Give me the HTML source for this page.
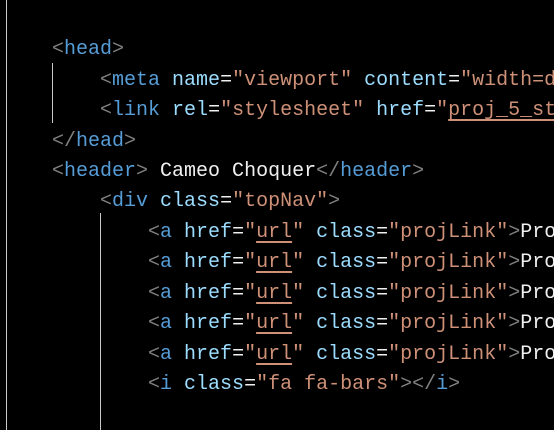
<!DOCTYPE html><html><head><style>
html{overflow:hidden;}
body{margin:0;background:#000;width:554px;height:430px;overflow:hidden;position:relative;font-family:"Liberation Mono",monospace;font-size:20px;}
.l{position:absolute;white-space:pre;line-height:30px;height:30px;max-width:calc(554px - 100%);}
.g{color:#808080}.t{color:#569cd6}.a{color:#9cdcfe}.s{color:#ce9178}.w{color:#f0f0f0}
.u{text-decoration:underline;text-decoration-color:#ce9178;text-underline-offset:4px;}
.v{position:absolute;width:1px;background:#c8c8c8;}
.c{position:absolute;left:0;top:0;width:554px;height:430px;overflow:hidden;}
</style></head><body><div class="c">
<div class="v" style="left:6px;top:0;height:430px"></div>
<div class="v" style="left:52px;top:63px;height:60px"></div>
<div class="v" style="left:100px;top:213px;height:217px"></div>
<div class="l" style="left:52px;top:35px"><span class="g">&lt;</span><span class="t">head</span><span class="g">&gt;</span></div>
<div class="l" style="left:100px;top:66px"><span class="g">&lt;</span><span class="t">meta</span> <span class="a">name</span><span class="w">=</span><span class="s">"viewport"</span> <span class="a">content</span><span class="w">=</span><span class="s">"width=d</span></div>
<div class="l" style="left:100px;top:96px"><span class="g">&lt;</span><span class="t">link</span> <span class="a">rel</span><span class="w">=</span><span class="s">"stylesheet"</span> <span class="a">href</span><span class="w">=</span><span class="s">"<span class="u">proj_5_st</span></span></div>
<div class="l" style="left:52px;top:127px"><span class="g">&lt;/</span><span class="t">head</span><span class="g">&gt;</span></div>
<div class="l" style="left:52px;top:157px"><span class="g">&lt;</span><span class="t">header</span><span class="g">&gt;</span><span class="w"> Cameo Choquer</span><span class="g">&lt;/</span><span class="t">header</span><span class="g">&gt;</span></div>
<div class="l" style="left:100px;top:187px"><span class="g">&lt;</span><span class="t">div</span> <span class="a">class</span><span class="w">=</span><span class="s">"topNav"</span><span class="g">&gt;</span></div>
<div class="l" style="left:148px;top:218px"><span class="g">&lt;</span><span class="t">a</span> <span class="a">href</span><span class="w">=</span><span class="s">"<span class="u">url</span>"</span> <span class="a">class</span><span class="w">=</span><span class="s">"projLink"</span><span class="g">&gt;</span><span class="w">Pro</span></div>
<div class="l" style="left:148px;top:248px"><span class="g">&lt;</span><span class="t">a</span> <span class="a">href</span><span class="w">=</span><span class="s">"<span class="u">url</span>"</span> <span class="a">class</span><span class="w">=</span><span class="s">"projLink"</span><span class="g">&gt;</span><span class="w">Pro</span></div>
<div class="l" style="left:148px;top:279px"><span class="g">&lt;</span><span class="t">a</span> <span class="a">href</span><span class="w">=</span><span class="s">"<span class="u">url</span>"</span> <span class="a">class</span><span class="w">=</span><span class="s">"projLink"</span><span class="g">&gt;</span><span class="w">Pro</span></div>
<div class="l" style="left:148px;top:309px"><span class="g">&lt;</span><span class="t">a</span> <span class="a">href</span><span class="w">=</span><span class="s">"<span class="u">url</span>"</span> <span class="a">class</span><span class="w">=</span><span class="s">"projLink"</span><span class="g">&gt;</span><span class="w">Pro</span></div>
<div class="l" style="left:148px;top:340px"><span class="g">&lt;</span><span class="t">a</span> <span class="a">href</span><span class="w">=</span><span class="s">"<span class="u">url</span>"</span> <span class="a">class</span><span class="w">=</span><span class="s">"projLink"</span><span class="g">&gt;</span><span class="w">Pro</span></div>
<div class="l" style="left:148px;top:370px"><span class="g">&lt;</span><span class="t">i</span> <span class="a">class</span><span class="w">=</span><span class="s">"fa fa-bars"</span><span class="g">&gt;&lt;/</span><span class="t">i</span><span class="g">&gt;</span></div>
</div></body></html>
